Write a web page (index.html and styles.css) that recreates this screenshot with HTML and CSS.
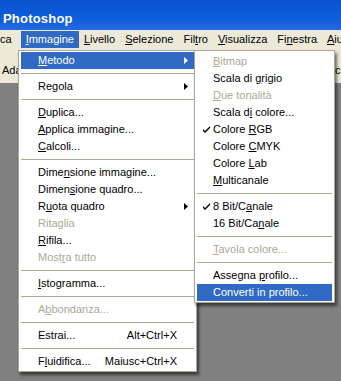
FILE: index.html
```html
<!DOCTYPE html>
<html lang="it">
<head>
    <meta charset="UTF-8">
    <title>Photoshop</title>
    <link rel="stylesheet" href="styles.css">
</head>
<body>
    <!-- Title bar -->
    <div class="titlebar">
        <span class="title">Photoshop</span>
    </div>

    <!-- Menu bar -->
    <div class="menubar">
        <span class="mb-item first">ca</span>
        <span class="mb-item active"><u>I</u>mmagine</span>
        <span class="mb-item"><u>L</u>ivello</span>
        <span class="mb-item"><u>S</u>elezione</span>
        <span class="mb-item">Fil<u>t</u>ro</span>
        <span class="mb-item"><u>V</u>isualizza</span>
        <span class="mb-item">Fi<u>n</u>estra</span>
        <span class="mb-item"><u>A</u>iuto</span>
    </div>

    <!-- Options bar -->
    <div class="options">
        <span class="opt-left">Ada</span>
        <span class="opt-right">chiudi</span>
    </div>

    <!-- Immagine menu -->
    <div class="menu main-menu">
        <div class="row hot"><span class="label"><u>M</u>etodo</span><span class="sub"><svg width="4" height="7" viewBox="0 0 4 7"><path d="M0 0L4 3.5L0 7z"/></svg></span></div>
        <div class="sep"></div>
        <div class="row"><span class="label">Re<u>g</u>ola</span><span class="sub"><svg width="4" height="7" viewBox="0 0 4 7"><path d="M0 0L4 3.5L0 7z"/></svg></span></div>
        <div class="sep"></div>
        <div class="row"><span class="label"><u>D</u>uplica...</span><span class="sub"></span></div>
        <div class="row"><span class="label"><u>A</u>pplica immagine...</span><span class="sub"></span></div>
        <div class="row"><span class="label"><u>C</u>alcoli...</span><span class="sub"></span></div>
        <div class="sep"></div>
        <div class="row"><span class="label">Dime<u>n</u>sione immagine...</span><span class="sub"></span></div>
        <div class="row"><span class="label">Dimen<u>s</u>ione quadro...</span><span class="sub"></span></div>
        <div class="row"><span class="label">R<u>u</u>ota quadro</span><span class="sub"><svg width="4" height="7" viewBox="0 0 4 7"><path d="M0 0L4 3.5L0 7z"/></svg></span></div>
        <div class="row off"><span class="label">Ritaglia</span><span class="sub"></span></div>
        <div class="row"><span class="label"><u>R</u>ifila...</span><span class="sub"></span></div>
        <div class="row off"><span class="label">Most<u>r</u>a tutto</span><span class="sub"></span></div>
        <div class="sep"></div>
        <div class="row"><span class="label"><u>I</u>stogramma...</span><span class="sub"></span></div>
        <div class="sep"></div>
        <div class="row off"><span class="label">A<u>b</u>bondanza...</span><span class="sub"></span></div>
        <div class="sep"></div>
        <div class="row"><span class="label">Estrai...</span><span class="keys">Alt+Ctrl+X</span><span class="sub"></span></div>
        <div class="sep"></div>
        <div class="row"><span class="label">F<u>l</u>uidifica...</span><span class="keys">Maiusc+Ctrl+X</span><span class="sub"></span></div>
    </div>

    <!-- Metodo submenu -->
    <div class="menu sub-menu">
        <div class="row off"><span class="check"></span><span class="label"><u>B</u>itmap</span></div>
        <div class="row"><span class="check"></span><span class="label">Scala di <u>g</u>rigio</span></div>
        <div class="row off"><span class="check"></span><span class="label"><u>D</u>ue tonalità</span></div>
        <div class="row"><span class="check"></span><span class="label">Scala d<u>i</u> colore...</span></div>
        <div class="row"><span class="check"><svg width="7" height="7" viewBox="0 0 7 7"><path d="M0 3L2 5L7 0L7 2L2 7L0 5z"/></svg></span><span class="label">Colore <u>R</u>GB</span></div>
        <div class="row"><span class="check"></span><span class="label">Colore <u>C</u>MYK</span></div>
        <div class="row"><span class="check"></span><span class="label">Colore <u>L</u>ab</span></div>
        <div class="row"><span class="check"></span><span class="label"><u>M</u>ulticanale</span></div>
        <div class="sep"></div>
        <div class="row"><span class="check"><svg width="7" height="7" viewBox="0 0 7 7"><path d="M0 3L2 5L7 0L7 2L2 7L0 5z"/></svg></span><span class="label">8 Bit/C<u>a</u>nale</span></div>
        <div class="row"><span class="check"></span><span class="label">16 Bit/Ca<u>n</u>ale</span></div>
        <div class="sep"></div>
        <div class="row off"><span class="check"></span><span class="label"><u>T</u>avola colore...</span></div>
        <div class="sep"></div>
        <div class="row"><span class="check"></span><span class="label">Assegna <u>p</u>rofilo...</span></div>
        <div class="row hot"><span class="check"></span><span class="label">Converti in profilo...</span></div>
    </div>
</body>
</html>
```

FILE: styles.css
```css
/* Global */
body, html {
    margin: 0;
    padding: 0;
    width: 100%;
    height: 100%;
    overflow: hidden;
    font-family: Tahoma, "Liberation Sans", Arial, sans-serif;
    font-size: 11px;
    color: black;
    background-color: #808080;
}

u {
    text-decoration: underline;
    text-underline-offset: 1px;
}

/* Title bar */
.titlebar {
    height: 30px;
    background: linear-gradient(#0a53d2, #0c5cd9 60%, #2669e0);
    box-sizing: border-box;
    padding: 10px 0 0 3px;
}

.title {
    color: white;
    font-family: "Liberation Sans", Arial, sans-serif;
    font-size: 13px;
    font-weight: bold;
    line-height: 17px;
    letter-spacing: 0.2px;
}

/* Menu bar */
.menubar {
    height: 20px;
    display: flex;
    background: #ece9d8;
    white-space: nowrap;
    overflow: hidden;
}

.mb-item {
    height: 17px;
    line-height: 17px;
    margin-top: 1px;
    padding: 0 5px;
}

.mb-item.first {
    padding: 0 9px 0 0;
}

.mb-item.active {
    background: #316ac5;
    color: white;
    padding: 0 5px;
}

/* Options bar */
.options {
    height: 33px;
    display: flex;
    align-items: center;
    padding-top: 6px;
    box-sizing: border-box;
    background: #ece9d8;
    white-space: nowrap;
    overflow: hidden;
}

.opt-left {
    flex: 0 0 333px;
    padding-left: 2px;
}

/* Menus */
.menu {
    position: absolute;
    box-sizing: border-box;
    background: white;
    border: 1px solid #aca899;
    box-shadow: 2px 3px 3px rgba(0, 0, 0, 0.55);
    white-space: nowrap;
}

.main-menu {
    top: 50px;
    left: 18px;
    width: 179px;
    padding: 1px 2px;
}

.sub-menu {
    top: 50px;
    left: 194px;
    width: 141px;
    padding: 2px 2px 1px 2px;
}

.row {
    height: 17px;
    line-height: 17px;
    display: flex;
    align-items: center;
}

.main-menu .row {
    padding-left: 17px;
}

.row .label {
    flex: 1;
}

.row .sub {
    width: 17px;
    display: flex;
    justify-content: center;
}

.row .sub svg {
    fill: black;
}

.row .check {
    width: 16px;
    display: flex;
}

.row .check svg {
    margin-left: 6px;
    fill: black;
}

.row.hot {
    background: #316ac5;
    color: white;
}

.row.hot svg {
    fill: white;
}

.row.off {
    color: #aca899;
}

.sep {
    height: 1px;
    margin: 4px 0;
    background: #aca899;
}
```
